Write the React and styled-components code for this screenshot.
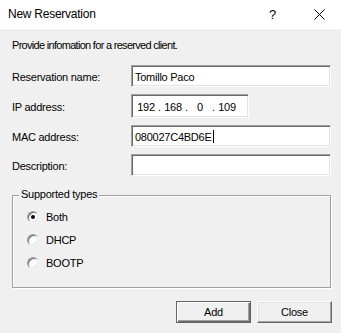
import styled, { createGlobalStyle } from 'styled-components';

const GlobalStyle = createGlobalStyle`
  html, body {
    margin: 0;
    padding: 0;
    background: #f0f0f0;
  }
`;

const Window = styled.div`
  width: 341px;
  height: 333px;
  background: #f0f0f0;
  font-family: "Liberation Sans", Arial, sans-serif;
  font-size: 11px;
  letter-spacing: -0.25px;
  color: #000;
  display: flex;
  flex-direction: column;
  overflow: hidden;
`;

const TitleBar = styled.div`
  height: 29px;
  background: #fff;
  display: flex;
  align-items: center;
  padding-left: 8px;
  box-sizing: border-box;

  .title {
    flex: 1;
    font-size: 12px;
    padding-bottom: 1px;
  }
  .help {
    width: 12px;
    font-size: 13px;
    margin-right: 33px;
    padding-bottom: 1px;
  }
  .close {
    display: flex;
    margin-right: 16px;
  }
`;

const Body = styled.div`
  padding: 10px 10px 0 12px;
  display: flex;
  flex-direction: column;
`;

const Intro = styled.div`
  line-height: 13px;
  letter-spacing: -0.7px;
`;

const Form = styled.div`
  display: grid;
  grid-template-columns: 119px 200px;
  row-gap: 7px;
  margin-top: 13px;
  align-items: center;
`;

const Label = styled.label`
  line-height: 13px;
  padding-top: 2px;
`;

const Field = styled.div`
  box-sizing: border-box;
  width: ${p => p.$width || 200}px;
  height: ${p => p.$height || 22}px;
  background: #fff;
  border: 1px solid;
  border-color: #a0a0a0 #fff #fff #a0a0a0;
  box-shadow: inset 1px 1px 0 #696969, inset -1px -1px 0 #e3e3e3;
  display: flex;
  align-items: center;
  padding-left: 3px;
  padding-top: 1px;
  white-space: pre;
`;

const Caret = styled.span`
  display: inline-block;
  width: 1px;
  height: 13px;
  background: #000;
  margin-left: 1px;
`;

const IpPart = styled.span`
  width: 22px;
  text-align: center;
`;

const IpDot = styled.span`
  width: 5px;
  text-align: center;
`;

const Group = styled.div`
  position: relative;
  margin-top: 19px;
  height: 93px;
  box-sizing: border-box;
  border: 1px solid #a0a0a0;
  box-shadow: inset 1px 1px 0 #fff, 1px 1px 0 #fff;
  padding: 9px 0 0 14px;
  display: flex;
  flex-direction: column;
`;

const Legend = styled.span`
  position: absolute;
  top: -8px;
  left: 6px;
  padding: 0 2px;
  background: #f0f0f0;
  line-height: 13px;
`;

const RadioRow = styled.div`
  height: 23px;
  display: flex;
  align-items: center;
  gap: 7px;
`;

const RadioDot = styled.span`
  box-sizing: border-box;
  width: 12px;
  height: 12px;
  border-radius: 50%;
  background: #fff;
  border: 1px solid;
  border-color: #a0a0a0 #f4f4f4 #f4f4f4 #a0a0a0;
  box-shadow: inset 1px 1px 0 #696969, inset -1px -1px 0 #e3e3e3;
  display: flex;
  align-items: center;
  justify-content: center;

  &::after {
    content: '';
    width: 4px;
    height: 4px;
    border-radius: 50%;
    background: ${p => (p.$checked ? '#000' : 'transparent')};
  }
`;

const Buttons = styled.div`
  display: flex;
  justify-content: flex-end;
  gap: 6px;
  margin-top: 13px;
  margin-right: -1px;
`;

const Button = styled.button`
  box-sizing: border-box;
  width: 75px;
  height: 22px;
  font-family: inherit;
  font-size: 11px;
  letter-spacing: -0.25px;
  color: #000;
  background: #f0f0f0;
  padding: 0;
  border: 1px solid;
  border-color: ${p => (p.$default ? '#646464' : '#fff #696969 #696969 #fff')};
  box-shadow: ${p =>
    p.$default
      ? 'inset 1px 1px 0 #fff, inset -1px -1px 0 #696969, inset -2px -2px 0 #a0a0a0'
      : 'inset -1px -1px 0 #a0a0a0, inset 1px 1px 0 #e3e3e3'};
`;

const types = [
  { name: 'Both', checked: true },
  { name: 'DHCP' },
  { name: 'BOOTP' },
];

const App = () => {
  return (
    <Window>
      <GlobalStyle />
      <TitleBar>
        <span className="title">New Reservation</span>
        <span className="help">?</span>
        <span className="close">
          <svg width="11" height="11" viewBox="0 0 11 11">
            <path d="M0.5 0.5 L10.5 10.5 M10.5 0.5 L0.5 10.5" stroke="#000" strokeWidth="1" />
          </svg>
        </span>
      </TitleBar>
      <Body>
        <Intro>Provide infomation for a reserved client.</Intro>
        <Form>
          <Label>Reservation name:</Label>
          <Field>Tomillo Paco</Field>
          <Label>IP address:</Label>
          <Field $width={118} $height={24}>
            <IpPart>192</IpPart>
            <IpDot>.</IpDot>
            <IpPart>168</IpPart>
            <IpDot>.</IpDot>
            <IpPart>0</IpPart>
            <IpDot>.</IpDot>
            <IpPart>109</IpPart>
          </Field>
          <Label>MAC address:</Label>
          <Field>
            080027C4BD6E<Caret />
          </Field>
          <Label>Description:</Label>
          <Field />
        </Form>
        <Group>
          <Legend>Supported types</Legend>
          {types.map(t => (
            <RadioRow key={t.name}>
              <RadioDot $checked={t.checked} />
              <span>{t.name}</span>
            </RadioRow>
          ))}
        </Group>
        <Buttons>
          <Button $default>Add</Button>
          <Button>Close</Button>
        </Buttons>
      </Body>
    </Window>
  );
};

export default App;
